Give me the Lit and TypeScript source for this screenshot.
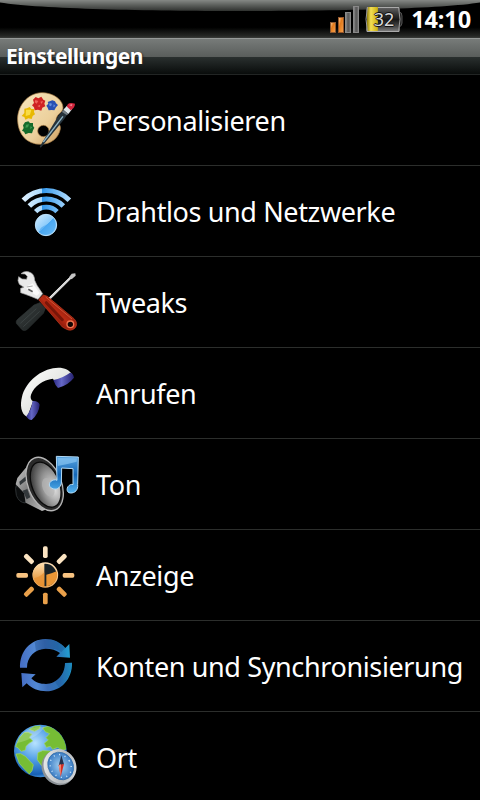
import { LitElement, css, html, svg } from "lit";
import type { SVGTemplateResult } from "lit";
import { customElement, property } from "lit/decorators.js";

interface Setting {
  label: string;
  icon: string;
}

const SETTINGS: Setting[] = [
  { label: "Personalisieren", icon: "palette" },
  { label: "Drahtlos und Netzwerke", icon: "wireless" },
  { label: "Tweaks", icon: "tools" },
  { label: "Anrufen", icon: "phone" },
  { label: "Ton", icon: "sound" },
  { label: "Anzeige", icon: "display" },
  { label: "Konten und Synchronisierung", icon: "sync" },
  { label: "Ort", icon: "location" },
];

const SUN_RAYS = [0, 45, 90, 135, 180, 225, 270, 315];

// All icons are drawn on a 270 x 270 grid.
const ICONS: Record<string, () => SVGTemplateResult> = {
  palette: () => svg`
    <defs>
      <linearGradient id="wood" x1="0" y1="0" x2="1" y2="1">
        <stop offset="0" stop-color="#f7e6bd" />
        <stop offset="0.6" stop-color="#ecd09c" />
        <stop offset="1" stop-color="#c99a5c" />
      </linearGradient>
    </defs>
    <path fill="url(#wood)" stroke="#a87c44" stroke-width="2" fill-rule="evenodd"
      d="M53 138 C50 95 82 54 125 53 C162 53 190 76 189 99 C188 114 172 116 169 130 C166 144 184 146 181 162 C176 188 154 208 122 208 C80 208 55 178 53 138 Z
         M130 151 a17 17 0 1 0 0.1 34 a17 17 0 1 0 -0.1 -34 Z" />
    <path fill="#cf2222" d="M99 74 l8 -8 8 4 9 -5 6 9 6 3 -3 9 3 8 -9 4 -3 9 -10 -3 -10 2 -2 -9 -6 -6 6 -7 Z" />
    <path fill="#f0645a" d="M106 75 l9 3 -5 8 -6 -4 Z M121 80 l8 -2 -4 9 Z M112 93 l9 -4 -2 8 Z" />
    <g transform="translate(-2 4)">
      <path fill="#2850b4" d="M145 77 l8 -3 6 -2 8 3 3 6 6 5 -6 7 -5 9 -8 -1 -9 1 -3 -8 -4 -6 6 -6 Z" />
      <path fill="#6690df" d="M151 80 l7 2 -3 8 -6 -3 Z M163 84 l5 5 -6 4 Z" />
    </g>
    <g transform="translate(-2 10)">
      <path fill="#e8b900" d="M75 91 l8 -1 8 -4 5 6 9 0 -1 9 3 7 -7 5 -3 9 -10 -2 -9 4 -3 -8 -8 -3 8 -9 Z" />
      <path fill="#f9dc45" d="M80 94 l16 0 -4 15 -13 4 Z" />
    </g>
    <g transform="translate(0 10)">
      <path fill="#146b2b" d="M75 132 l10 -3 5 5 9 0 0 9 4 5 -4 8 -3 9 -10 -1 -10 4 -4 -8 -6 -3 5 -8 -2 -8 Z" />
      <path fill="#3d9b51" d="M78 139 l9 -1 -3 9 -8 1 Z M91 144 l6 3 -6 6 Z" />
    </g>
    <g transform="translate(-1 11)">
      <path fill="#25323a" d="M120 204 L178 108 L192 94 L207 101 L194 121 L133 196 L123 207 Z" />
      <path stroke="#8fb5c6" stroke-width="4" d="M131 190 L190 113" />
      <path fill="#dfe5e8" d="M191 93 L202 81 L217 92 L206 106 Z" />
      <path fill="#707a80" d="M190 94 l16 11 -4 5 -15 -10 Z" />
      <path fill="#d3263e" d="M202 84 C201 73 213 70 226 75 C226 84 221 90 213 95 Z" />
      <path fill="#f18a93" d="M208 79 l10 -3 -2 7 Z" />
    </g>
  `,
  wireless: () => svg`
    <defs>
      <linearGradient id="waves" gradientUnits="userSpaceOnUse" x1="66" y1="0" x2="212" y2="0">
        <stop offset="0" stop-color="#e0f2ff" />
        <stop offset="0.42" stop-color="#a9d8fc" />
        <stop offset="0.42" stop-color="#3297ec" />
        <stop offset="1" stop-color="#b6dfff" />
      </linearGradient>
      <linearGradient id="dot" x1="0" y1="0" x2="1" y2="1">
        <stop offset="0" stop-color="#d6eeff" />
        <stop offset="0.5" stop-color="#8cccfb" />
        <stop offset="0.5" stop-color="#51adf3" />
        <stop offset="1" stop-color="#a3dbff" />
      </linearGradient>
    </defs>
    <g fill="none" stroke="url(#waves)" stroke-width="15">
      <path d="M70 91 C108 52 170 52 208 91" />
      <path d="M88 108 C116 80 162 80 190 108" />
      <path d="M107 125 C124 107 154 107 171 125" stroke-width="14" />
    </g>
    <circle cx="138" cy="165" r="32" fill="url(#dot)" stroke="#bde3ff" stroke-width="3" />
    <path fill="#3fa0ee" opacity="0.55" d="M122 190 C114 178 124 172 136 166 C148 160 154 150 160 146 C172 160 168 186 146 193 C136 195 128 194 122 190 Z" />
  `,
  tools: () => svg`
    <defs>
      <linearGradient id="handle" x1="0" y1="1" x2="1" y2="0">
        <stop offset="0.3" stop-color="#7d1408" />
        <stop offset="0.5" stop-color="#b92b14" />
        <stop offset="0.7" stop-color="#8e1a0b" />
      </linearGradient>
      <linearGradient id="grip" x1="0" y1="0" x2="1" y2="1">
        <stop offset="0" stop-color="#363c3c" />
        <stop offset="0.5" stop-color="#2b3030" />
        <stop offset="1" stop-color="#151919" />
      </linearGradient>
    </defs>
    <path stroke="#d4d4d4" stroke-width="7" d="M134 130 L214 51" />
    <path stroke="#f7f7f7" stroke-width="2" d="M133 128 L213 49" />
    <path fill="#c5c5c5" d="M207 52 L215 41 L226 40 L227 47 L215 58 Z" />
    <path fill="url(#grip)" stroke="#2d3333" stroke-width="2" d="M49 190 Q47 183 53 178 L102 135 L120 128 L136 145 L130 160 L82 208 Q74 215 66 209 Z" />
    <path stroke="#454d4d" stroke-width="2" d="M61 190 L109 146 M70 200 L119 154" />
    <path fill="#e9e9e9" stroke="#a6a6a6" stroke-width="2"
      d="M54 62 L56 50 L66 57 L80 58 L82 49 L75 42 L63 41 Q76 30 92 38 Q103 43 104 61 L111 76 L128 101 L114 118 L95 110 L76 103 L62 98 L62 85 L72 82 L58 73 Z" />
    <path fill="#fafafa" d="M76 82 L98 70 L119 99 L110 107 L92 96 Z" />
    <path stroke="#5b5b5b" stroke-width="5" d="M85 88 L98 95" />
    <path stroke="#aaa" stroke-width="3" d="M80 81 L98 78" />
    <path fill="url(#handle)" stroke="#c23c20" stroke-width="2" d="M116 119 L130 105 L142 109 L222 176 Q236 190 225 204 Q213 216 196 206 L187 201 Z" />
    <path stroke="#e06a45" stroke-width="3" opacity="0.7" d="M137 111 L216 177" />
    <path stroke="#661006" stroke-width="9" stroke-linecap="round" opacity="0.75" d="M139 128 L187 179" />
    <circle cx="211" cy="193" r="10" fill="#120503" stroke="#ef7551" stroke-width="4" />
  `,
  phone: () => svg`
    <defs>
      <linearGradient id="receiver" x1="0" y1="0" x2="1" y2="1">
        <stop offset="0" stop-color="#ffffff" />
        <stop offset="0.5" stop-color="#e6e8e5" />
        <stop offset="1" stop-color="#a9aba9" />
      </linearGradient>
      <linearGradient id="cap">
        <stop offset="0" stop-color="#2c2a86" />
        <stop offset="0.4" stop-color="#6568c6" />
        <stop offset="1" stop-color="#25216f" />
      </linearGradient>
    </defs>
    <path fill="url(#receiver)" d="M82 195 C62 185 60 158 66 134 C76 96 112 58 159 49 C185 44 208 51 216 68 L171 93 L158 80 C130 84 102 102 93 128 C90 138 93 144 99 148 Z" />
    <path fill="url(#cap)" d="M160 84 Q187 79 210 62 Q219 62 222 77 Q205 99 174 108 Q165 99 160 84 Z" />
    <path fill="url(#cap)" d="M98 147 Q115 146 119 158 Q117 184 95 204 Q84 204 79 193 Q94 174 98 147 Z" />
  `,
  sound: () => svg`
    <defs>
      <linearGradient id="basket" x1="0" y1="0" x2="1" y2="1">
        <stop offset="0" stop-color="#dcdcdc" />
        <stop offset="0.5" stop-color="#777" />
        <stop offset="1" stop-color="#c8c8c8" />
      </linearGradient>
      <radialGradient id="cone" cx="0.72" cy="0.65" r="0.8">
        <stop offset="0" stop-color="#e2e2e2" />
        <stop offset="0.5" stop-color="#929292" />
        <stop offset="1" stop-color="#303030" />
      </radialGradient>
      <linearGradient id="note" x1="0" y1="0" x2="0" y2="1">
        <stop offset="0" stop-color="#5aa5e0" />
        <stop offset="0.5" stop-color="#1467b7" />
        <stop offset="1" stop-color="#55b3ee" />
      </linearGradient>
    </defs>
    <path fill="#0c0e0f" stroke="#2c3032" stroke-width="3" d="M52 119 Q43 139 49 160 Q57 182 76 183 L84 132 Z" />
    <path fill="url(#basket)" d="M52 108 L80 74 Q94 45 115 45 L145 200 L126 207 L77 182 L72 153 L47 127 Z" />
    <path fill="#33383b" d="M58 119 L78 103 L80 114 L60 130 Z M68 146 L82 141 L91 166 L80 172 Z" />
    <ellipse cx="134" cy="126" rx="50" ry="84" fill="#2a2a2a" stroke="#b5b5b5" stroke-width="4" transform="rotate(-22 134 126)" />
    <ellipse cx="137" cy="128" rx="41" ry="71" fill="url(#cone)" stroke="#0b0b0b" stroke-width="4" transform="rotate(-22 137 128)" />
    <ellipse cx="145" cy="136" rx="17" ry="29" fill="#b4b4b4" opacity="0.7" transform="rotate(-22 145 136)" />
    <path fill="url(#note)" stroke="#b3daf5" stroke-width="3"
      d="M169 43 L235 45 L233 128 C235 143 225 154 211 153 C198 152 198 134 211 128 Q216 126 219 128 L219 80 L185 78 L184 124 C181 139 168 145 156 139 C143 133 147 117 161 114 Q167 112 171 115 Z" />
    <path fill="#94cef8" opacity="0.6" d="M173 48 L231 49 L230 59 Q204 66 173 72 Z" />
  `,
  display: () => svg`
    <defs>
      <linearGradient id="sun" gradientUnits="userSpaceOnUse" x1="0" y1="36" x2="0" y2="212">
        <stop offset="0" stop-color="#fff3e0" />
        <stop offset="0.5" stop-color="#f9cc92" />
        <stop offset="1" stop-color="#e28525" />
      </linearGradient>
      <linearGradient id="disc" x1="0" y1="0" x2="0" y2="1">
        <stop offset="0" stop-color="#ffdfae" />
        <stop offset="0.55" stop-color="#edab5c" />
        <stop offset="1" stop-color="#e98e2c" />
      </linearGradient>
    </defs>
    ${SUN_RAYS.map(
      (angle) => svg`
        <rect x="129" y="37" width="14" height="35" rx="5"
          fill=${angle === 0 || angle === 45 || angle === 315 ? "#fbe4c2" : angle === 90 || angle === 270 ? "#f8c381" : "#e9a04a"}
          transform="rotate(${angle} 136 124)" />
      `,
    )}
    <circle cx="136" cy="123" r="36" fill="#172126" stroke="url(#sun)" stroke-width="5" />
    <path fill="url(#disc)" d="M133 88 A35 35 0 0 0 133 158 Z" />
    <path fill="#e59032" opacity="0.7" d="M102 133 Q117 131 133 115 L133 158 Q108 156 102 133 Z" />
    <path fill="#e99636" d="M139 122 Q154 119 170 112 A35 35 0 0 1 139 157 Z" />
  `,
  sync: () => svg`
    <defs>
      <linearGradient id="arrows" gradientUnits="userSpaceOnUse" x1="60" y1="120" x2="216" y2="110">
        <stop offset="0" stop-color="#456dc4" />
        <stop offset="0.3" stop-color="#5288d3" />
        <stop offset="0.5" stop-color="#3b6cb6" />
        <stop offset="0.75" stop-color="#2b75b9" />
        <stop offset="1" stop-color="#21a6d6" />
      </linearGradient>
    </defs>
    <g fill="url(#arrows)">
      <path d="M60 131 C59 82 91 46 136 45 C160 45 182 55 196 72 L208 60 L210 101 L169 98 L180 87 C169 78 154 74 137 74 C105 75 81 98 81 131 Z" />
      <path d="M216 116 C217 165 184 201 139 202 C115 202 94 193 80 178 L67 190 L64 147 L107 151 L94 163 C106 176 121 180 138 180 C170 179 195 152 195 117 Z" />
    </g>
    <path fill="#15437f" opacity="0.3" d="M104 54 Q120 45 136 45 Q173 46 196 72 L184 84 Q166 72 137 74 Q121 74 108 82 Z" />
    <path fill="#173f80" opacity="0.25" d="M165 173 Q194 155 195 117 L216 116 Q214 165 178 192 Z" />
  `,
  location: () => svg`
    <defs>
      <radialGradient id="ocean" cx="0.4" cy="0.35" r="0.7">
        <stop offset="0" stop-color="#b7e3ff" />
        <stop offset="0.45" stop-color="#529fe6" />
        <stop offset="0.85" stop-color="#1760b5" />
        <stop offset="1" stop-color="#64b2ef" />
      </radialGradient>
      <linearGradient id="ring" x1="0" y1="0" x2="1" y2="1">
        <stop offset="0" stop-color="#f5f5f5" />
        <stop offset="0.6" stop-color="#b4b9bd" />
        <stop offset="1" stop-color="#e5e7e9" />
      </linearGradient>
      <radialGradient id="dial">
        <stop offset="0" stop-color="#a5d2f2" />
        <stop offset="1" stop-color="#3b7cc4" />
      </radialGradient>
      <clipPath id="globe"><circle cx="121" cy="111" r="78" /></clipPath>
    </defs>
    <circle cx="121" cy="111" r="79" fill="url(#ocean)" />
    <g clip-path="url(#globe)" fill="#76bd35" stroke="#a8d95d" stroke-width="2">
      <path d="M47 98 L58 72 L72 56 L84 55 L96 61 L88 70 L98 81 L87 88 L78 97 L76 108 L64 112 L54 101 Z" />
      <path d="M88 46 L104 37 L121 36 L118 44 L104 52 Z" />
      <path d="M48 120 L62 119 L76 127 L91 143 L100 152 L96 170 L88 180 L74 166 L58 148 Z" />
      <path d="M128 42 L146 36 L173 48 L193 72 L202 105 L187 108 L173 100 L158 106 L151 97 L139 100 L133 88 L145 78 L138 71 L149 59 L136 53 Z" />
      <path d="M114 116 L128 110 L151 111 L157 126 L147 141 L135 164 L124 154 L112 137 Z" />
    </g>
    <path fill="#fff" opacity="0.2" d="M52 87 C61 51 97 34 133 40 C117 66 83 80 52 87 Z" />
    <ellipse cx="175" cy="161" rx="49" ry="54" fill="#8b9196" transform="rotate(-32 175 161)" />
    <ellipse cx="180" cy="157" rx="48" ry="53" fill="url(#ring)" transform="rotate(-32 180 157)" />
    <ellipse cx="182" cy="156" rx="37" ry="43" fill="url(#dial)" stroke="#2e6aa6" stroke-width="2" transform="rotate(-32 182 156)" />
    <ellipse cx="182" cy="156" rx="30" ry="36" fill="none" stroke="#d7efff" stroke-width="4" stroke-dasharray="3 14" transform="rotate(-32 182 156)" />
    <path fill="#24334f" d="M184 124 L192 151 L176 155 Z" />
    <path fill="#d42f24" d="M176 153 L192 150 L182 188 Z" />
    <path fill="#f28b75" d="M176 153 L183 151 L182 188 Z" />
  `,
};

// Vertical position of each drawing inside its row.
const ICON_OFFSETS: Record<string, number> = {
  palette: 0,
  wireless: 12,
  tools: 9,
  phone: 12,
  sound: 9,
  display: 12,
  sync: 9,
  location: 6,
};

@customElement("status-bar")
export class StatusBar extends LitElement {
  @property({ type: Number })
  battery = 32;

  @property()
  time = "14:10";

  private renderSignal() {
    return html`
      <svg class="signal" width="32" height="30" viewBox="0 0 32 30">
        <defs>
          <linearGradient id="on" x1="0" y1="0" x2="1" y2="1">
            <stop offset="0" stop-color="#ffd6a0" />
            <stop offset="0.4" stop-color="#e37b1d" />
            <stop offset="1" stop-color="#f5a34e" />
          </linearGradient>
          <linearGradient id="off">
            <stop offset="0" stop-color="#999" />
            <stop offset="0.5" stop-color="#555" />
            <stop offset="1" stop-color="#777" />
          </linearGradient>
        </defs>
        <g stroke-width="1">
          <rect x="1.5" y="18.5" width="5" height="10" fill="url(#on)" stroke="#8d5a33" />
          <rect x="9.5" y="13.5" width="5" height="15" fill="url(#on)" stroke="#96562a" />
          <rect x="16.5" y="8.5" width="5" height="20" fill="url(#off)" stroke="#888" />
          <rect x="24.5" y="2.5" width="5" height="26" fill="url(#off)" stroke="#888" />
        </g>
      </svg>
    `;
  }

  private renderBattery() {
    return html`
      <div class="battery">
        <svg width="40" height="30" viewBox="0 0 40 30">
          <defs>
            <linearGradient id="shell" x1="0" y1="0" x2="0" y2="1">
              <stop offset="0" stop-color="#666" />
              <stop offset="0.25" stop-color="#3a3a3a" />
              <stop offset="0.5" stop-color="#171717" />
              <stop offset="0.8" stop-color="#4c4c4c" />
              <stop offset="1" stop-color="#888" />
            </linearGradient>
            <linearGradient id="charge">
              <stop offset="0" stop-color="#8c7b08" />
              <stop offset="0.35" stop-color="#f4df55" />
              <stop offset="1" stop-color="#c9ae10" />
            </linearGradient>
          </defs>
          <path fill="#222" stroke="#555" d="M35 8 Q38 8 38 12 V19 Q38 22 35 23 Z" />
          <rect x="2" y="3" width="34" height="25" rx="2" fill="url(#shell)" />
          <rect x="3" y="3" width=${(this.battery / 100) * 34} height="25" fill="url(#charge)" />
          <path fill="none" stroke="#999" d="M3.5 3 Q0.5 15 3.5 28 M34.5 3 Q37.5 15 34.5 28" />
          <path stroke="#aaa" d="M3 27.5 H35 M14 3.5 H35" />
        </svg>
        <span class="level">${this.battery}</span>
      </div>
    `;
  }

  render() {
    return html`
      <svg class="gloss" width="480" height="12" viewBox="0 0 480 12">
        <defs>
          <linearGradient id="gloss" gradientUnits="userSpaceOnUse" x1="0" y1="0" x2="0" y2="11">
            <stop offset="0" stop-color="#858885" />
            <stop offset="0.5" stop-color="#595c59" />
            <stop offset="1" stop-color="#2f312f" />
          </linearGradient>
        </defs>
        <path fill="url(#gloss)" d="M0 0 H480 V2.5 C440 9 330 11 240 11 C150 11 40 9 0 2.5 Z" />
      </svg>
      ${this.renderSignal()} ${this.renderBattery()}
      <span class="time">${this.time}</span>
    `;
  }

  static styles = css`
    :host {
      position: relative;
      display: flex;
      justify-content: flex-end;
      align-items: flex-start;
      box-sizing: border-box;
      height: 38px;
      padding: 4px 9px 0 0;
      background: linear-gradient(#000 72%, #262825 95%, #3a3c3a);
    }

    svg {
      display: block;
    }

    .gloss {
      position: absolute;
      top: 0;
      left: 0;
    }

    .signal {
      position: relative;
      margin-right: 3px;
    }

    .battery {
      position: relative;
      width: 40px;
      height: 30px;
      margin-right: 7px;
    }

    .level {
      position: absolute;
      inset: 0;
      font-size: 18px;
      line-height: 30px;
      text-align: center;
      color: #d8d8d8;
      text-shadow:
        -1px 0 #111,
        1px 0 #111,
        0 1px #111,
        0 -1px #111;
    }

    .time {
      position: relative;
      width: 60px;
      font-size: 23.5px;
      font-weight: 700;
      line-height: 31px;
      letter-spacing: -0.1px;
      text-align: right;
      white-space: nowrap;
      color: #fff;
    }
  `;
}

@customElement("setting-row")
export class SettingRow extends LitElement {
  @property()
  label = "";

  @property()
  icon = "";

  render() {
    return html`
      <svg width="90" height="90" viewBox="0 0 270 270" fill="none">
        <g transform="translate(0 ${ICON_OFFSETS[this.icon]})">
          ${ICONS[this.icon]()}
        </g>
      </svg>
      <span class="label">${this.label}</span>
    `;
  }

  static styles = css`
    :host {
      display: flex;
      align-items: center;
      gap: 6px;
      height: 90px;
      border-bottom: 1px solid #2c2e2c;
    }

    svg {
      flex: none;
    }

    .label {
      padding-top: 2px;
      font-size: 27px;
      line-height: 36px;
      letter-spacing: -0.38px;
      white-space: nowrap;
      color: #fff;
    }
  `;
}

@customElement("app-root")
export class AppRoot extends LitElement {
  render() {
    return html`
      <status-bar></status-bar>
      <h1>Einstellungen</h1>
      <main>
        ${SETTINGS.map(
          ({ label, icon }) => html`
            <setting-row .label=${label} .icon=${icon}></setting-row>
          `,
        )}
      </main>
    `;
  }

  static styles = css`
    :host {
      display: block;
      width: 480px;
      height: 800px;
      overflow: hidden;
      background: #000;
      font-family: "Noto Sans", "Open Sans", sans-serif;
    }

    h1 {
      box-sizing: border-box;
      height: 37px;
      margin: 0;
      padding-left: 6px;
      border-top: 1px solid #969a98;
      border-bottom: 1px solid #222524;
      background: linear-gradient(
        #777b79,
        #5a5e5c 50%,
        #2a302f 51%,
        #090c0b
      );
      font-size: 21px;
      font-weight: 700;
      line-height: 35px;
      letter-spacing: -0.48px;
      white-space: nowrap;
      color: #fff;
      text-shadow: 1px 1px 2px #222;
    }
  `;
}

declare global {
  interface HTMLElementTagNameMap {
    "app-root": AppRoot;
    "status-bar": StatusBar;
    "setting-row": SettingRow;
  }
}
